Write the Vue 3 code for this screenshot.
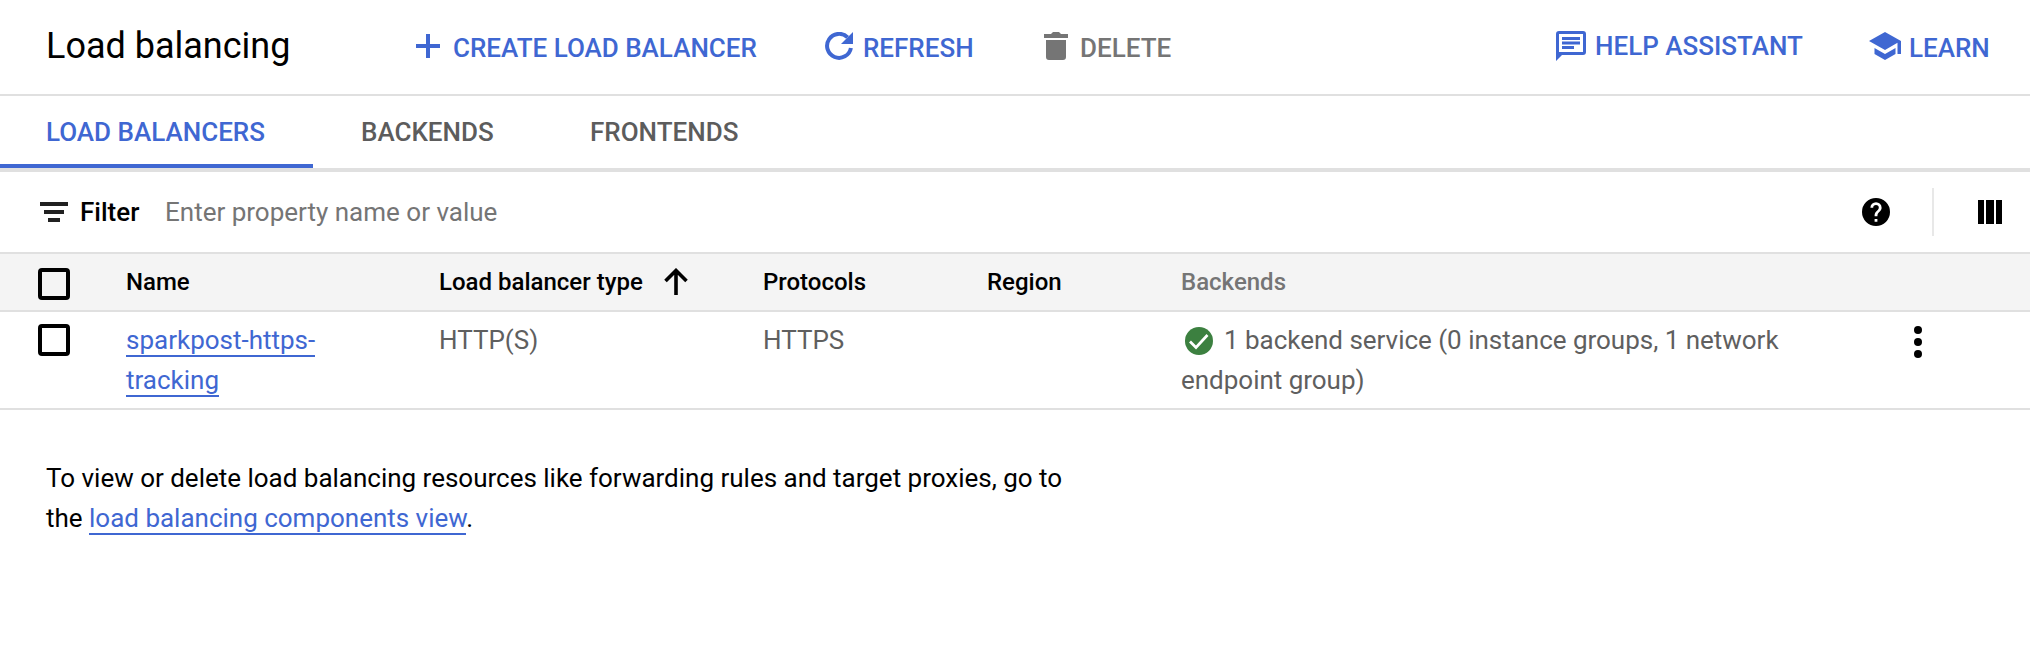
<script setup>
const tabs = ['LOAD BALANCERS', 'BACKENDS', 'FRONTENDS']
</script>

<template>
  <div class="page">
    <header class="top">
      <h1>Load balancing</h1>
      <button class="act create">
        <svg class="ic" width="24" height="24" viewBox="0 0 24 24"><path d="M10 0h4v10h10v4H14v10h-4V14H0v-4h10z" /></svg>
        <span>CREATE LOAD BALANCER</span>
      </button>
      <button class="act refresh">
        <svg class="ic" width="28" height="28" viewBox="0 0 28 28"><path d="M22.600 5.400A12 12 0 1 0 25.900 16" fill="none" stroke="currentColor" stroke-width="4" /><path d="M28 0v12H16z" /></svg>
        <span>REFRESH</span>
      </button>
      <button class="act delete">
        <svg class="ic" width="24" height="28" viewBox="0 0 24 28"><path d="M2 8h20v17a3 3 0 0 1-3 3H5a3 3 0 0 1-3-3zM0 2h7l2-2h6l2 2h7v4H0z" /></svg>
        <span>DELETE</span>
      </button>
      <button class="act help">
        <svg class="ic" width="30" height="30" viewBox="0 0 30 30"><path fill-rule="evenodd" d="M3 0h24a3 3 0 0 1 3 3v18a3 3 0 0 1-3 3H6l-6 6V3a3 3 0 0 1 3-3zm0 3v18h24V3zM6 6h18v3H6zm0 4.500h18v3H6zM6 15h12v3H6z" /></svg>
        <span>HELP ASSISTANT</span>
      </button>
      <button class="act learn">
        <svg class="ic" width="32" height="28" viewBox="0 0 32 28"><path d="M5.500 16v6L16 28l10.500-6v-6L16 22zM16 0 0 9l16 9 12.500-7.200V22H32V9z" /></svg>
        <span>LEARN</span>
      </button>
    </header>

    <nav class="tabs">
      <a v-for="(t, i) in tabs" :key="t" :class="['tab', 'tab' + i, { active: i === 0 }]"><span>{{ t }}</span></a>
    </nav>

    <div class="filter">
      <svg class="ficon" width="28" height="20" viewBox="0 0 28 20"><path d="M0 0h28v4H0zM4 8h20v4H4zM8 16h12v4H8z" /></svg>
      <b class="flabel">Filter</b>
      <span class="hint">Enter property name or value</span>
      <svg class="q" width="28" height="28" viewBox="2 2 20 20"><path d="M12 2a10 10 0 1 0 0 20 10 10 0 0 0 0-20zm1 17h-2v-2h2zm2.070-7.750-.9.920C13.450 12.900 13 13.500 13 15h-2v-.5c0-1.100.45-2.100 1.170-2.830l1.240-1.260c.37-.36.59-.86.59-1.410a2 2 0 1 0-4 0H8a4 4 0 1 1 8 0c0 .88-.36 1.680-.93 2.250z" /></svg>
      <i class="sep"></i>
      <svg width="24" height="24" viewBox="0 0 24 24"><path d="M0 0h6v24H0zM8 0h8v24H8zM18 0h6v24h-6z" /></svg>
    </div>

    <div class="row head">
      <i class="box"></i>
      <span>Name</span>
      <span class="sort">Load balancer type
        <svg width="24" height="28" viewBox="0 0 24 28"><path d="M12 27V3M1.500 13 12 2.500 22.500 13" fill="none" stroke="#000" stroke-width="3.600" /></svg>
      </span>
      <span>Protocols</span>
      <span>Region</span>
      <span class="muted">Backends</span>
      <span></span>
    </div>
    <div class="row body">
      <i class="box"></i>
      <span><a class="link">sparkpost-https-<br>tracking</a></span>
      <span>HTTP(S)</span>
      <span>HTTPS</span>
      <span></span>
      <span class="backend"><svg class="ok" width="28" height="28" viewBox="0 0 28 28"><circle cx="14" cy="14" r="14" fill="#3c8040" /><path d="m5 14.500 6 6L22.500 8" fill="none" stroke="#fff" stroke-width="2.700" /></svg>1 backend service (0 instance groups, 1 network<br>endpoint group)</span>
      <svg class="dots" width="8" height="32" viewBox="0 0 8 32"><circle cx="4" cy="4" r="4" /><circle cx="4" cy="16" r="4" /><circle cx="4" cy="28" r="4" /></svg>
    </div>

    <p class="note">To view or delete load balancing resources like forwarding rules and target proxies, go to<br>the <a class="link">load balancing components view</a>.</p>
  </div>
</template>

<style>
body { background: #fff; }
</style>

<style scoped>
.page { width: 2030px; height: 672px; overflow: hidden; background: #fff; font-family: Roboto, sans-serif; font-size: 26px; color: #000; }
.page * { box-sizing: border-box; }
svg { display: block; flex: none; fill: currentColor; }
.top { display: flex; align-items: flex-start; height: 96px; border-bottom: 2px solid #e0e0e0; padding-left: 46px; white-space: nowrap; }
h1 { margin: 25px 0 0; width: 370px; font-size: 36px; font-weight: 400; line-height: 42px; }
.act { display: flex; align-items: flex-start; padding: 32px 0 0; border: 0; background: none; color: #3f67d2; font: 500 26px/32px Roboto, sans-serif; }
.act span { display: block; }
.create { width: 409px; gap: 13px; }
.create .ic { margin-top: 2px; }
.refresh { width: 219px; gap: 10px; }
.delete { width: 512px; gap: 12px; color: #757575; }
.help { width: 313px; gap: 9px; padding-top: 31px; }
.help span { margin-top: -1px; }
.learn { gap: 8px; }
.tabs { display: flex; height: 76px; border-bottom: 4px solid #e0e0e0; color: #5c5c5c; font-weight: 500; line-height: 30px; }
.tab { height: 72px; padding-top: 21px; white-space: nowrap; }
.tab0 { width: 313px; padding-left: 46px; }
.tab1 { width: 229px; padding-left: 48px; }
.tab2 { padding-left: 48px; }
.active { color: #3f67d2; border-bottom: 4px solid #3f67d2; }
.filter { display: flex; align-items: center; height: 80px; padding-left: 40px; line-height: 30px; }
.ficon { color: #212121; }
.flabel { width: 85px; margin-left: 12px; font-weight: 500; }
.hint { color: #757575; }
.q { margin-left: auto; margin-right: 42px; }
.sep { width: 2px; height: 48px; margin-right: 44px; background: #e8e8e8; }
.filter svg:last-child { margin-right: 28px; }
.row { display: grid; grid-template-columns: 88px 313px 324px 224px 194px 733px 1fr; padding-left: 38px; white-space: nowrap; }
.head { height: 60px; padding-top: 14px; background: #f4f4f4; border-top: 2px solid #e0e0e0; border-bottom: 2px solid #e0e0e0; font-size: 24px; font-weight: 500; line-height: 28px; }
.sort { display: flex; gap: 21px; }
.muted { color: #757575; }
.box { width: 32px; height: 32px; border: 4px solid #000; border-radius: 4px; }
.body { height: 98px; border-bottom: 2px solid #e0e0e0; color: #5f5f5f; line-height: 40px; padding-top: 8px; }
.body .box { margin-top: 4px; }
.backend { letter-spacing: -0.020px; }
.link { color: #3f67d2; border-bottom: 2px solid #3f67d2; }
.ok { display: inline-block; vertical-align: -6px; margin: 0 11px 0 4px; }
.dots { color: #000; margin-top: 6px; }
.note { margin: 48px 0 0; padding-left: 46px; line-height: 40px; letter-spacing: -0.010px; white-space: nowrap; }
</style>
